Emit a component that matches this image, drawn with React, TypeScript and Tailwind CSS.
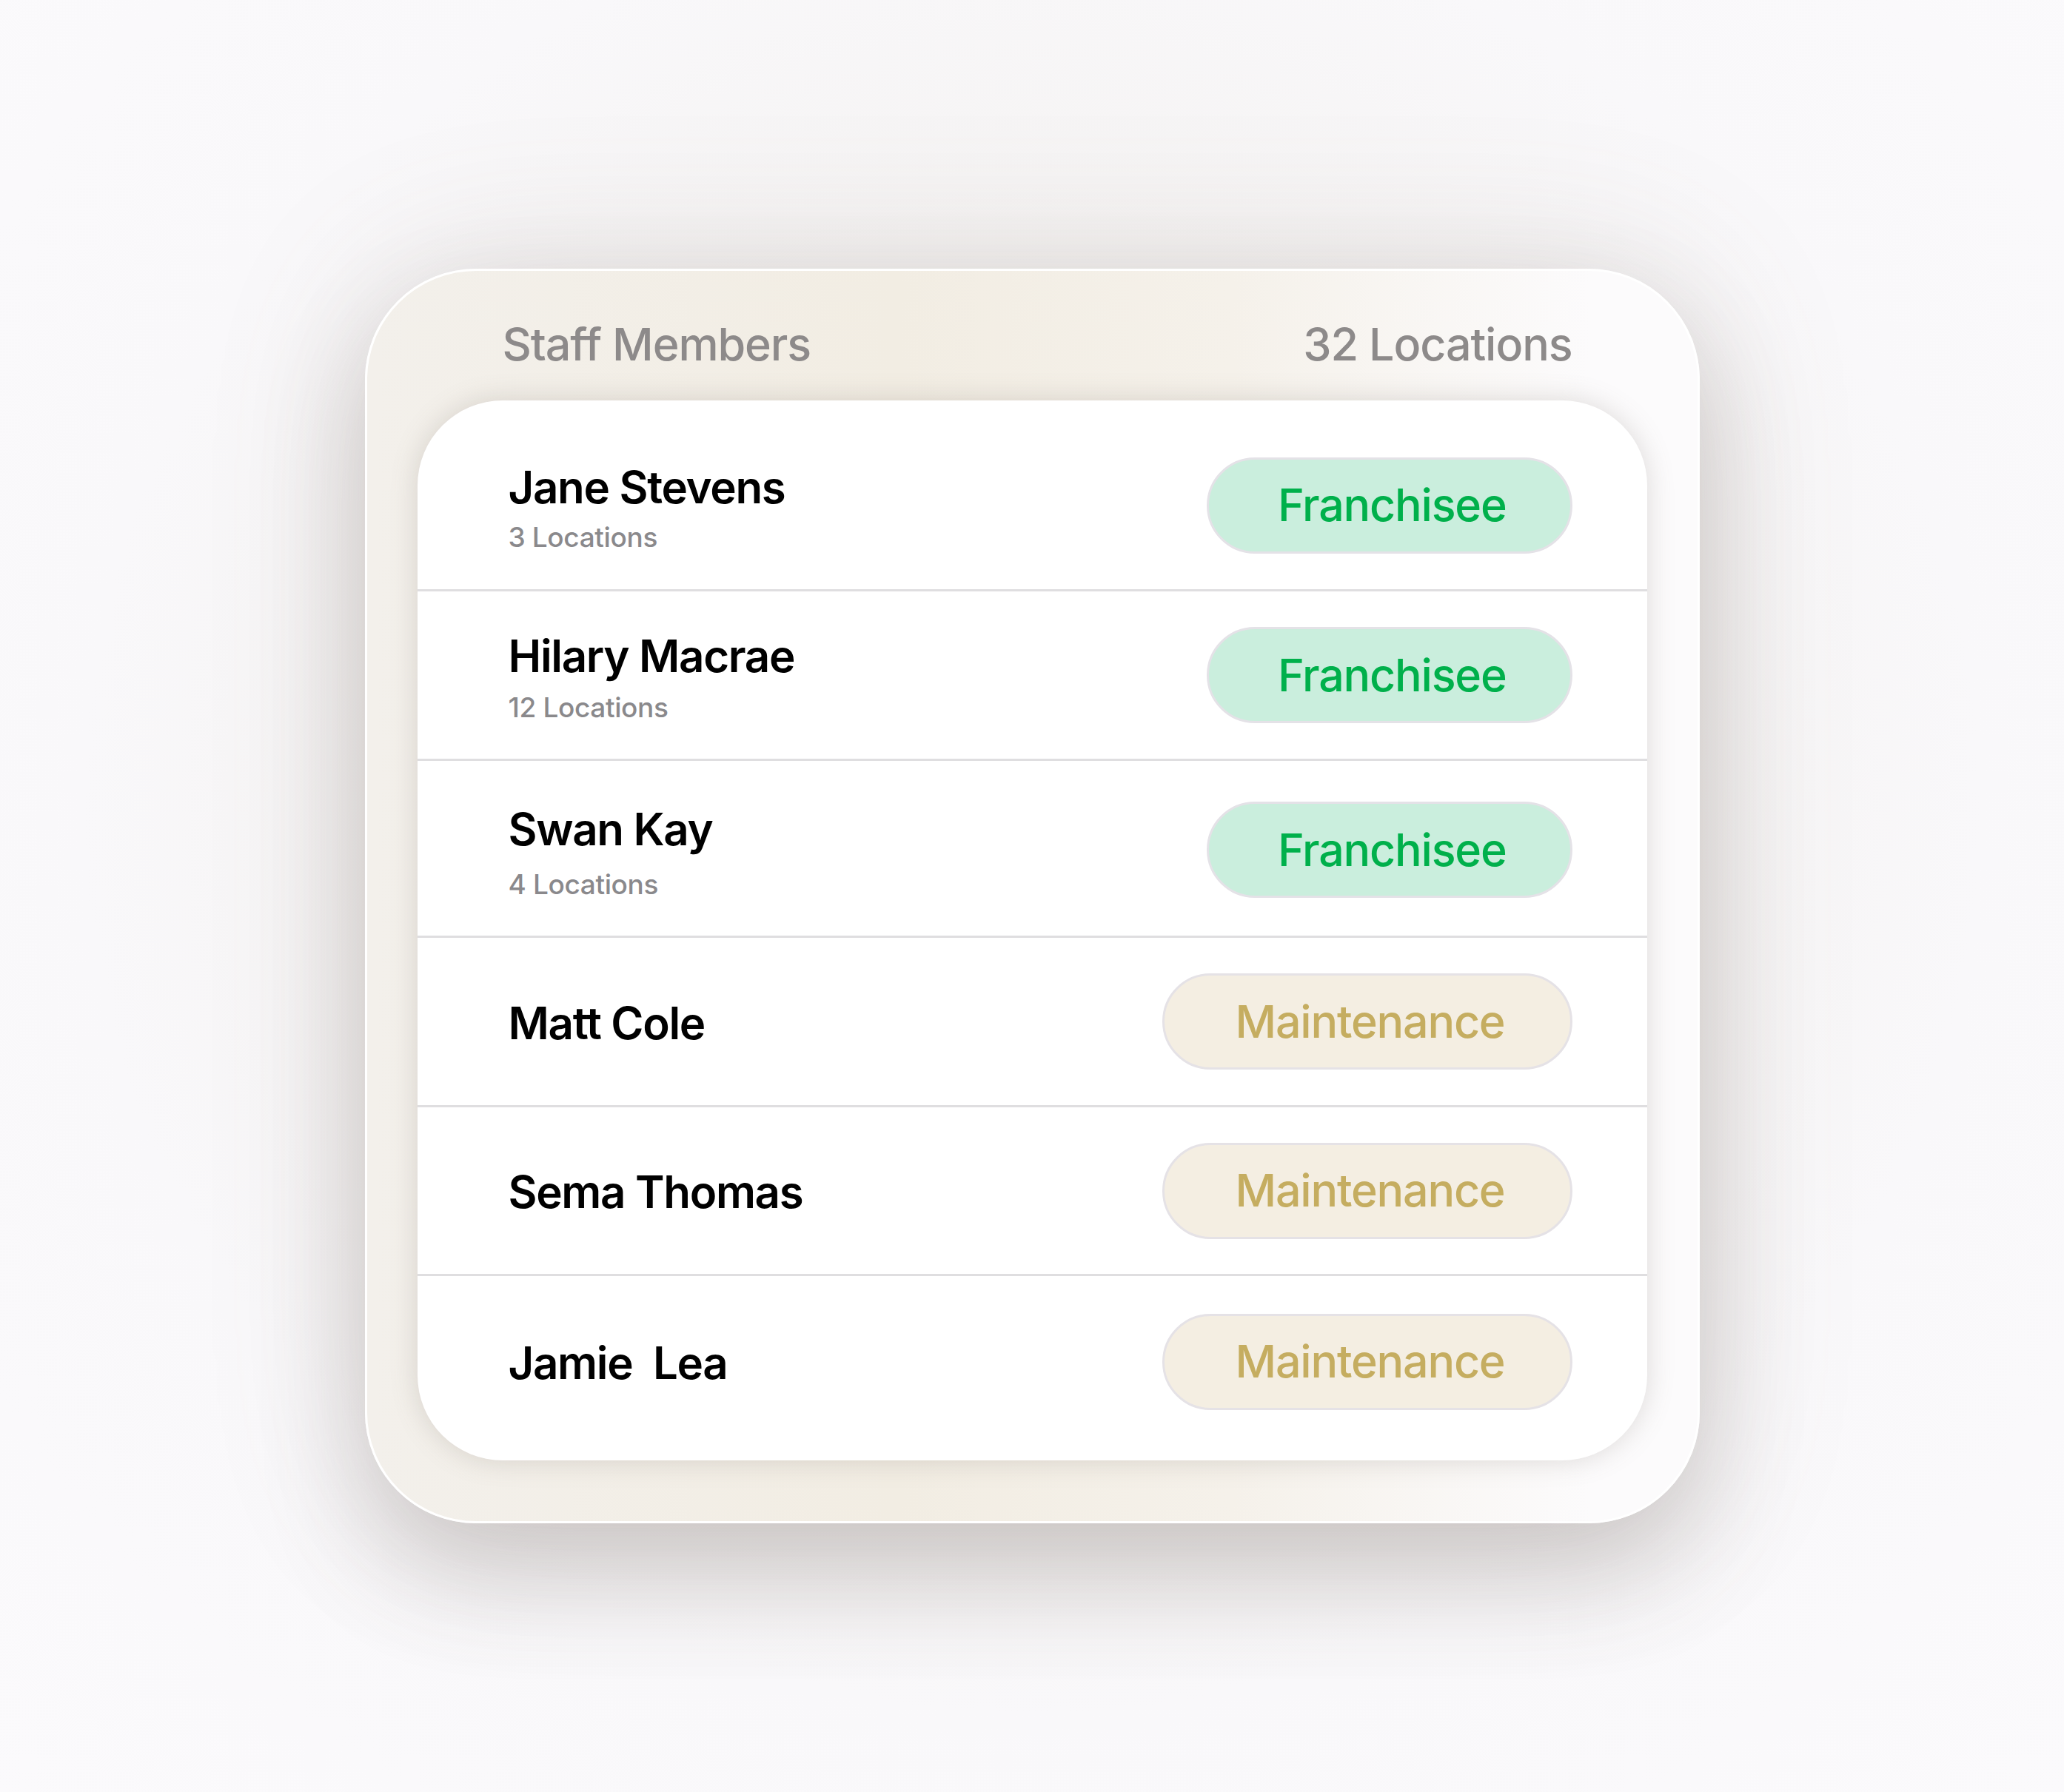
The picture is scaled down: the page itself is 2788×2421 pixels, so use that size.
type Role = 'franchisee' | 'maintenance';

interface Staff {
  name: string;
  locations?: string;
  role: Role;
  rowClass: string;
  gapClass: string;
}

const staff: Staff[] = [
  { name: 'Jane Stevens', locations: '3 Locations', role: 'franchisee', rowClass: 'h-[230px]', gapClass: 'mt-[19px]' },
  { name: 'Hilary Macrae', locations: '12 Locations', role: 'franchisee', rowClass: 'h-[229px]', gapClass: 'mt-[21px]' },
  { name: 'Swan Kay', locations: '4 Locations', role: 'franchisee', rowClass: 'h-[239px] pt-[4px]', gapClass: 'mt-[26px]' },
  { name: 'Matt Cole', role: 'maintenance', rowClass: 'h-[229px]', gapClass: '' },
  { name: 'Sema Thomas', role: 'maintenance', rowClass: 'h-[228px]', gapClass: '' },
  { name: 'Jamie  Lea', role: 'maintenance', rowClass: 'h-[231px]', gapClass: '' },
];

function RoleBadge({ role }: { role: Role }) {
  if (role === 'franchisee') {
    return (
      <div className="h-[130px] pl-[93px] pr-[86px] flex items-center justify-center rounded-full border-[3px] border-[#e4e2e7] bg-[#caeedd] text-[#00b04b] text-[61px] font-medium leading-none tracking-[-0.02em]">
        Franchisee
      </div>
    );
  }
  return (
    <div className="h-[130px] pl-[95px] pr-[88px] flex items-center justify-center rounded-full border-[3px] border-[#e5e2e6] bg-[#f4eee2] text-[#c5ad60] text-[61px] font-medium leading-none tracking-[-0.02em]">
      Maintenance
    </div>
  );
}

export default function App() {
  return (
    <div className="w-[2788px] h-[2421px] flex items-center justify-center bg-[radial-gradient(ellipse_at_50%_45%,#eeeae4_0%,#f4f2f1_35%,#f9f8fa_65%,#fbfafc_100%)] font-['Inter','Noto_Sans',sans-serif]">
      {/* Outer tray */}
      <div className="w-[1803px] rounded-[150px] border-[3px] border-white bg-[linear-gradient(90deg,#f3f0eb_0%,#f2ede3_40%,#f5f1ea_65%,#fcfbfc_92%)] shadow-[0_70px_140px_rgba(95,85,75,0.24),0_0_220px_rgba(130,120,110,0.16)] px-[68px] pb-[82px]">
        {/* Header */}
        <div className="pt-[69px] pb-[45px] pl-[115px] pr-[101px] flex items-center justify-between text-[61px] font-medium leading-none text-[#8d8a8a] tracking-[-0.018em]">
          <span>Staff Members</span>
          <span>32 Locations</span>
        </div>

        {/* List */}
        <div className="bg-white rounded-[115px] pt-[28px] pb-[18px] shadow-[0_0_36px_rgba(110,100,90,0.22)] overflow-hidden">
          {staff.map((s, i) => (
            <div
              key={s.name}
              className={`${s.rowClass} pl-[123px] pr-[101px] flex items-center justify-between ${i < staff.length - 1 ? 'border-b-[3px] border-[#dfdee0]' : ''}`}
            >
              <div className={`flex flex-col ${s.locations ? 'pt-[6px]' : 'pt-[3px]'}`}>
                <span className="text-[60px] font-semibold leading-none text-black tracking-[-0.022em] whitespace-pre">
                  {s.name}
                </span>
                {s.locations && (
                  <span className={`${s.gapClass} text-[37px] font-medium leading-none text-[#8a898c] tracking-[-0.01em]`}>
                    {s.locations}
                  </span>
                )}
              </div>
              <RoleBadge role={s.role} />
            </div>
          ))}
        </div>
      </div>
    </div>
  );
}
